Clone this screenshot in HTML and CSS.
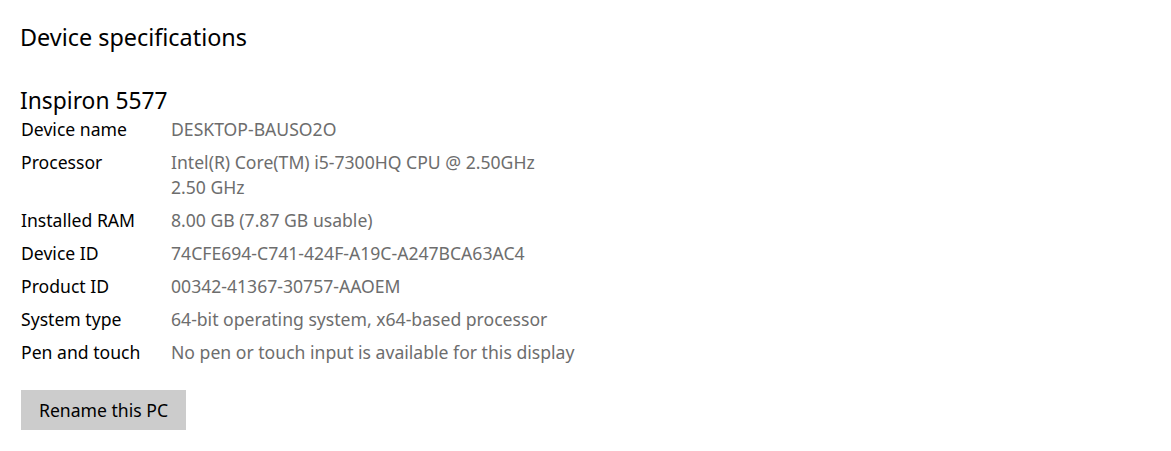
FILE: index.html
```html
<!DOCTYPE html>
<html>
<head>
<meta charset="utf-8">
<link rel="stylesheet" href="styles.css">
</head>
<body>
<div class="page">
  <h1 class="title">Device specifications</h1>
  <h2 class="model">Inspiron 5577</h2>
  <div class="specs">
    <div class="label">Device name</div><div class="value">DESKTOP-BAUSO2O</div>
    <div class="label">Processor</div><div class="value">Intel(R) Core(TM) i5-7300HQ CPU @ 2.50GHz<br>2.50 GHz</div>
    <div class="label">Installed RAM</div><div class="value">8.00 GB (7.87 GB usable)</div>
    <div class="label">Device ID</div><div class="value">74CFE694-C741-424F-A19C-A247BCA63AC4</div>
    <div class="label">Product ID</div><div class="value">00342-41367-30757-AAOEM</div>
    <div class="label">System type</div><div class="value">64-bit operating system, x64-based processor</div>
    <div class="label">Pen and touch</div><div class="value">No pen or touch input is available for this display</div>
  </div>
  <button class="rename">Rename this PC</button>
</div>
</body>
</html>
```
FILE: styles.css
```css
html, body {
  margin: 0;
  padding: 0;
  background: #ffffff;
}
.page {
  font-family: "Noto Sans", "Open Sans", sans-serif;
  color: #000;
  padding: 18px 0 0 20px;
}
.title {
  margin: 0;
  font-size: 23.4px;
  font-weight: 400;
  line-height: 38px;
}
.model {
  margin: 29px 0 0 0;
  font-size: 22.8px;
  font-weight: 400;
  line-height: 32px;
}
.specs {
  display: grid;
  grid-template-columns: 150px auto;
  row-gap: 8px;
  margin-left: 1px;
  margin-top: 0;
  font-size: 17.6px;
  line-height: 25px;
}
.label {
  color: #000;
}
.value {
  color: #6d6d6d;
}
.rename {
  margin: 25px 0 0 1px;
  width: 165px;
  height: 40px;
  border: none;
  background: #cccccc;
  font-family: inherit;
  font-size: 17.6px;
  color: #000;
  padding: 0;
}
```
